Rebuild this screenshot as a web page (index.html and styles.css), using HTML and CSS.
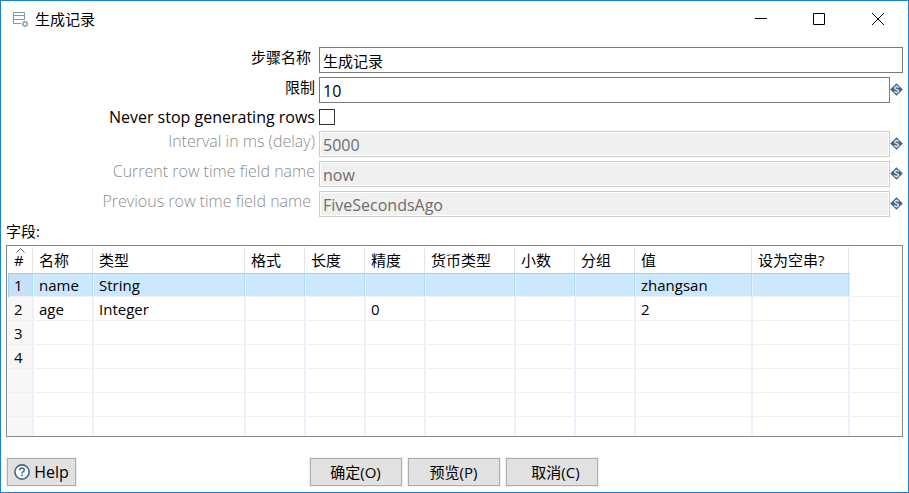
FILE: index.html
```html
<!DOCTYPE html>
<html lang="zh-CN">
<head>
<meta charset="utf-8">
<title>生成记录</title>
<link rel="stylesheet" href="styles.css">
</head>
<body>
<svg class="defs" aria-hidden="true">
  <symbol id="variable" viewBox="0 0 13 13">
    <path d="M6.5 0.2 12.8 6.5 6.5 12.8 0.2 6.5Z" fill="#3f6884"/>
    <path d="M8.6 4.6C7.9 3.2 4.7 3.3 4.7 5.1S8.6 6.3 8.6 8 5.1 9.8 4.3 8.4M6.5 2.4v1.4M6.5 9.2v1.4" fill="none" stroke="#e6edf2" stroke-width="1.3"/>
  </symbol>
</svg>
<div class="window">
  <header class="titlebar">
    <svg class="app-icon" viewBox="0 0 17 17" aria-hidden="true">
      <path d="M9 12.5H1.5V1.5h11v7M1.5 4.5h11M1.5 8.5h11" fill="none" stroke="#7d9bb0"/>
      <circle cx="13" cy="13" r="2.1" fill="none" stroke="#6f91a8" stroke-width="1.1"/>
      <path d="M13 9.8v1M13 15.2v1M9.8 13h1M15.2 13h1M10.7 10.7l.8.8M14.5 14.5l.8.8M10.7 15.3l.8-.8M14.5 11.5l.8-.8" stroke="#6f91a8"/>
    </svg>
    <h1>生成记录</h1>
    <div class="controls">
      <button type="button" aria-label="最小化"><svg viewBox="0 0 13 13"><path d="M1 5.5h12"/></svg></button>
      <button type="button" aria-label="最大化"><svg viewBox="0 0 13 13"><path d="M.5.5h11v11H.5z"/></svg></button>
      <button type="button" aria-label="关闭"><svg viewBox="0 0 13 13"><path d="M0 0l12 12M12 0L0 12"/></svg></button>
    </div>
  </header>
  <form class="form">
    <div class="row">
      <label class="inset" for="step">步骤名称</label>
      <input id="step" class="cjk" type="text" value="生成记录">
    </div>
    <div class="row">
      <label for="limit">限制</label>
      <input id="limit" type="text" value="10">
      <svg class="variable"><use href="#variable"/></svg>
    </div>
    <div class="row check">
      <label for="never">Never stop generating rows</label>
      <input id="never" type="checkbox">
    </div>
    <div class="row off">
      <label for="interval">Interval in ms (delay)</label>
      <input id="interval" type="text" value="5000" disabled>
      <svg class="variable"><use href="#variable"/></svg>
    </div>
    <div class="row off">
      <label for="current">Current row time field name</label>
      <input id="current" type="text" value="now" disabled>
      <svg class="variable"><use href="#variable"/></svg>
    </div>
    <div class="row off">
      <label class="inset" for="previous">Previous row time field name</label>
      <input id="previous" type="text" value="FiveSecondsAgo" disabled>
      <svg class="variable"><use href="#variable"/></svg>
    </div>
  </form>
  <h2 id="fields-title">字段:</h2>
  <div class="grid">
    <table aria-labelledby="fields-title">
      <colgroup>
        <col class="w-num"><col class="w-s"><col class="w-type"><col class="w-s"><col class="w-s"><col class="w-s"><col class="w-m"><col class="w-s"><col class="w-s"><col class="w-value"><col class="w-null"><col>
      </colgroup>
      <thead>
        <tr><th><svg class="sort" viewBox="0 0 9 5"><path d="M.5 4.5l4-4 4 4"/></svg>#</th><th>名称</th><th>类型</th><th>格式</th><th>长度</th><th>精度</th><th>货币类型</th><th>小数</th><th>分组</th><th>值</th><th>设为空串?</th><th></th></tr>
      </thead>
      <tbody>
        <tr class="selected"><td>1</td><td>name</td><td>String</td><td></td><td></td><td></td><td></td><td></td><td></td><td>zhangsan</td><td></td><td></td></tr>
        <tr><td>2</td><td>age</td><td>Integer</td><td></td><td></td><td>0</td><td></td><td></td><td></td><td>2</td><td></td><td></td></tr>
        <tr><td>3</td><td></td><td></td><td></td><td></td><td></td><td></td><td></td><td></td><td></td><td></td><td></td></tr>
        <tr><td>4</td><td></td><td></td><td></td><td></td><td></td><td></td><td></td><td></td><td></td><td></td><td></td></tr>
        <tr><td></td><td></td><td></td><td></td><td></td><td></td><td></td><td></td><td></td><td></td><td></td><td></td></tr>
        <tr><td></td><td></td><td></td><td></td><td></td><td></td><td></td><td></td><td></td><td></td><td></td><td></td></tr>
        <tr><td></td><td></td><td></td><td></td><td></td><td></td><td></td><td></td><td></td><td></td><td></td><td></td></tr>
      </tbody>
    </table>
  </div>
  <footer class="footer">
    <button type="button" class="btn help">
      <svg viewBox="0 0 16 16" aria-hidden="true"><circle cx="8" cy="8" r="7.1" fill="#fff" stroke="#3f6884" stroke-width="1.6"/><path d="M5.7 6.2C5.7 3.4 10.3 3.4 10.3 6 10.3 7.7 8 7.7 8 9.5M8 10.6v1.6" fill="none" stroke="#3f6884" stroke-width="1.5"/></svg>Help</button>
    <div class="actions">
      <button type="button" class="btn">确定(O)</button>
      <button type="button" class="btn">预览(P)</button>
      <button type="button" class="btn cancel">取消(C)</button>
    </div>
  </footer>
</div>
</body>
</html>
```
FILE: styles.css
```css
* { box-sizing: border-box; }

body {
  margin: 0;
  background: #fff;
  color: #000;
  font: 15px/20px "Open Sans", "Noto Sans CJK SC", sans-serif;
}

.defs { display: none; }
button, input { font: inherit; color: inherit; border-radius: 0; }
h1, h2 { margin: 0; font-size: 15px; font-weight: 400; }

.window {
  display: flex;
  flex-direction: column;
  height: 100vh;
  border: 1px solid #1883d7;
}

/* Title bar */
.titlebar { display: flex; align-items: center; height: 36px; padding-left: 11px; }
.app-icon { width: 17px; height: 17px; margin-right: 6px; }
.controls { display: flex; margin-left: auto; height: 100%; }
.controls button { display: grid; place-items: center; width: 59px; padding: 0; border: 0; background: none; }
.controls svg { width: 13px; height: 13px; fill: none; stroke: #000; }

/* Form */
.form { display: grid; gap: 4px; padding: 10px 5px 0 0; }
.row { display: flex; align-items: center; height: 26px; }
.row label { flex: none; width: 318px; padding: 0 4px 6px 0; text-align: right; }
.row .inset { padding-right: 8px; }
.row input[type="text"] {
  flex: 1;
  min-width: 0;
  height: 26px;
  margin: 0;
  padding: 1px 3px 0;
  border: 1px solid #7a7a7a;
  background: #fff;
  font-size: 16px;
}
.row input[type="text"].cjk { padding-top: 0; font-size: 15px; }
.row input[type="text"]:disabled {
  border-color: #ccc;
  background: #f0f0f0;
  box-shadow: inset 0 0 0 1px #fff;
  color: #6d6d6d;
}
.variable { flex: none; width: 13px; height: 13px; margin-bottom: 2px; }
.off label { color: #8c8c8c; font-size: 16px; font-weight: 300; }
.check { height: 20px; }
.row.check label { padding-bottom: 0; font-size: 16px; }
.check input {
  appearance: none;
  width: 16px;
  height: 16px;
  margin: 0;
  border: 1px solid #333;
  background: #fff;
}
.check input:checked { background: #333; }

/* Field table */
h2 { padding: 4px 5px; }
.grid {
  flex: 1;
  min-height: 0;
  margin: 0 5px;
  padding: 1px;
  border: 1px solid #828790;
  overflow: hidden;
}
.grid table { width: 100%; border-spacing: 0; table-layout: fixed; }
.w-num { width: 26px; }
.w-s { width: 60px; }
.w-m { width: 90px; }
.w-type { width: 152px; }
.w-value { width: 117px; }
.w-null { width: 97px; }
th, td { padding: 0 5px; text-align: left; font-weight: 400; white-space: nowrap; }
th {
  position: relative;
  height: 26px;
  background: linear-gradient(#e5e5e5, #e5e5e5) right 1px top / 1px 100% no-repeat;
}
th:last-child { background: none; }
td {
  height: 24px;
  background:
    linear-gradient(#ebf1fb, #ebf1fb) right / 2px 100% no-repeat,
    linear-gradient(#f0f0f0, #f0f0f0) bottom / 100% 1px no-repeat;
}
td:first-child { padding-left: 6px; background-color: #f7f7f7; }
th:first-child { padding-left: 6px; }
td:last-child { background: linear-gradient(#f0f0f0, #f0f0f0) bottom / 100% 1px no-repeat; }
.selected td:not(:last-child) {
  background:
    linear-gradient(#99d1ff, #99d1ff) top / 100% 1px no-repeat,
    linear-gradient(#f0f0f0, #f0f0f0) bottom / 100% 1px no-repeat,
    linear-gradient(#e4f1fd, #e4f1fd) right / 1px 100% no-repeat,
    linear-gradient(#b3dbfb, #b3dbfb) right 1px top / 1px 100% no-repeat,
    #cce8ff;
}
.selected td:first-child { background-color: #c5e0f7 !important; box-shadow: inset 1px 0 #99d1ff; }
.sort { position: absolute; top: 1px; left: 8px; width: 9px; height: 5px; fill: none; stroke: #555; }

/* Buttons */
.footer {
  display: grid;
  grid-template-columns: 1fr auto 1fr;
  align-items: center;
  padding: 21px 8px 6px 6px;
}
.btn {
  display: flex;
  align-items: center;
  justify-content: center;
  width: 92px;
  height: 28px;
  padding: 0;
  border: 1px solid #adadad;
  background: #e1e1e1;
  box-shadow: 0 0 0 1px #f0f0f0;
}
.cancel { padding-left: 8px; }
.help { gap: 4px; width: 69px; font-size: 16px; }
.help svg { width: 16px; height: 16px; }
.actions { display: flex; gap: 6px; }
```
